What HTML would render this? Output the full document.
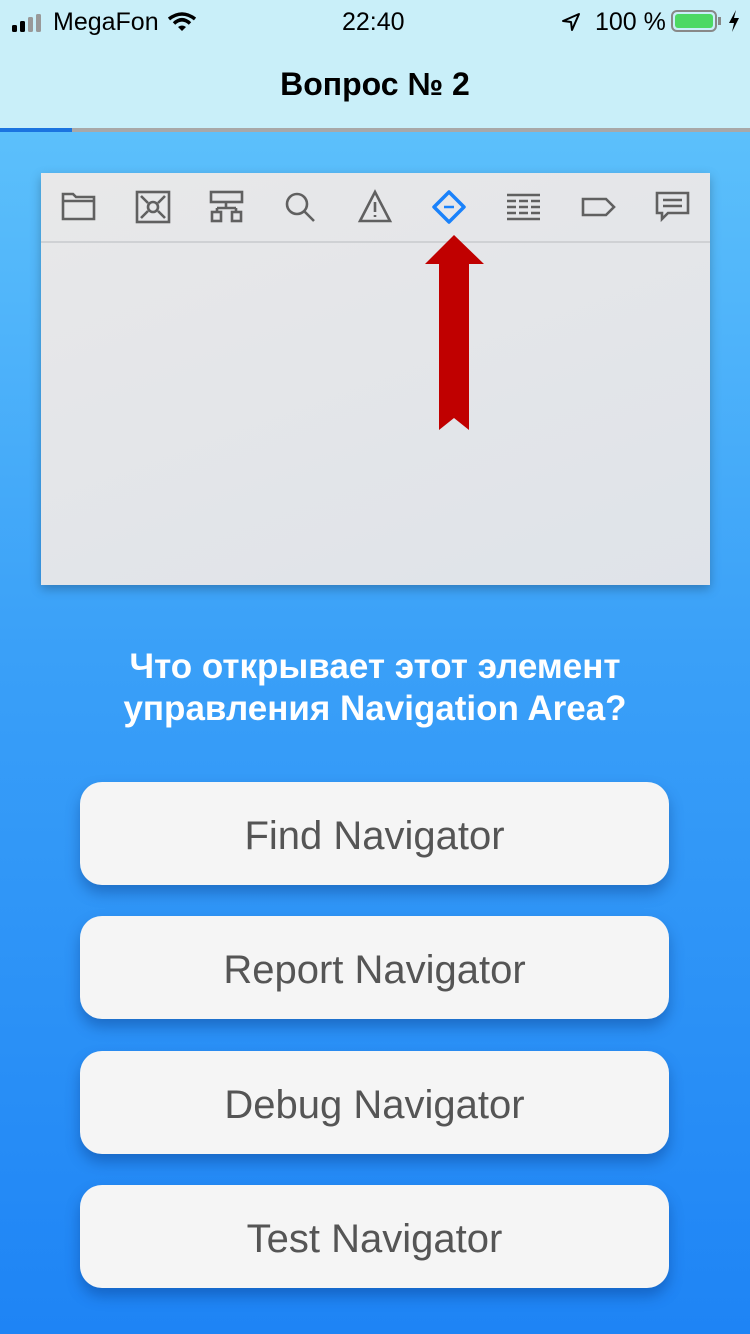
<!DOCTYPE html>
<html><head><meta charset="utf-8"><style>
*{margin:0;padding:0;box-sizing:border-box}
body{width:750px;height:1334px;overflow:hidden;position:relative;font-family:"Liberation Sans",sans-serif;background:linear-gradient(180deg,#5cc0fb 130px,#3aa0f8 650px,#1e84f5 1334px)}
.hdr{position:absolute;left:0;top:0;width:750px;height:128px;background:#c9eff9}
.st{position:absolute;top:8px;font-size:25px;color:#000}
.title{position:absolute;top:66px;width:750px;text-align:center;font-size:32px;font-weight:bold}
.prog{position:absolute;top:128px;left:0;width:750px;height:4px;background:#a8a8a8}
.prog div{width:72px;height:4px;background:#1b74e0}
.card{position:absolute;left:41px;top:173px;width:669px;height:412px;background:linear-gradient(160deg,#e8e8e9,#dfe3e9);box-shadow:0 4px 10px rgba(0,0,0,.25)}
.line{position:absolute;left:0;top:68px;width:669px;height:2px;background:#cfd1d4}
.q{position:absolute;top:646px;width:750px;text-align:center;color:#fff;font-weight:bold;font-size:35px;line-height:42px}
.btn{position:absolute;left:80px;width:589px;height:103px;border-radius:22px;background:#f5f5f5;box-shadow:0 8px 14px rgba(0,40,110,.35);text-align:center;line-height:109px;font-size:40px;color:#555}
</style></head><body>
<div class="hdr">
<svg style="position:absolute;left:12px;top:14px" width="34" height="18"><rect x="0" y="11" width="5" height="7" rx="1.5"/><rect x="8" y="7" width="5" height="11" rx="1.5"/><rect x="16" y="3" width="5" height="15" rx="1.5" fill="#999"/><rect x="24" y="0" width="5" height="18" rx="1.5" fill="#999"/></svg>
<div class="st" style="left:53px">MegaFon</div>
<svg style="position:absolute;left:168px;top:12px" width="28" height="20" viewBox="0 0 28 20"><path d="M1 7 Q14 -3 27 7" stroke="#000" stroke-width="3.5" fill="none"/><path d="M6 11.5 Q14 4 22 11.5" stroke="#000" stroke-width="3.5" fill="none"/><path d="M10 15 L14 19 L18 15 Q14 12 10 15Z"/></svg>
<div class="st" style="left:342px;font-weight:500">22:40</div>
<svg style="position:absolute;left:561px;top:12px" width="20" height="20" viewBox="0 0 20 20"><path d="M18 2 L2 9 L10 10 L11 18 Z" fill="none" stroke="#000" stroke-width="2" stroke-linejoin="round"/></svg>
<div class="st" style="left:595px">100 %</div>
<div style="position:absolute;left:671px;top:10px;width:46px;height:22px;border:2px solid #888;border-radius:6px;padding:2px"><div style="width:100%;height:100%;background:#4cd964;border-radius:3px"></div></div>
<div style="position:absolute;left:718px;top:17px;width:3px;height:8px;background:#888"></div>
<svg style="position:absolute;left:728px;top:10px" width="12" height="22" viewBox="0 0 12 22"><path d="M8 0 L1 13 H6 L4 22 L11 8 H6 Z"/></svg>
<div class="title">Вопрос № 2</div>
</div>
<div class="prog"><div></div></div>
<div class="card">
<svg width="669" height="70" viewBox="41 173 669 70" fill="none" stroke="#606060" stroke-width="2.6">
<path d="M63 194 h10 l3 3 h18 v22 h-31 z M63 201 h31"/>
<rect x="137" y="192" width="32" height="30"/><circle cx="153" cy="207" r="5"/><path d="M141 196 l7 7 M165 196 l-7 7 M141 218 l7 -7 M165 218 l-7 -7"/>
<rect x="211" y="192" width="31" height="10"/><path d="M226 202 v6 M217 208 h19 M217 208 v4 M236 208 v4"/><rect x="212" y="212" width="9" height="9"/><rect x="232" y="212" width="9" height="9"/>
<circle cx="297" cy="204" r="10"/><path d="M304 211 l10 10"/>
<path d="M375 192 L360 221 h30 Z M375 202 v10 M375 215 v2"/>
<path d="M449 192 L464 207 L449 222 L434 207 Z" stroke="#1a82fb" stroke-width="3.5" stroke-linejoin="round"/><path d="M444 207 h10" stroke="#1a82fb" stroke-width="2.5"/>
<path d="M507 195 h33 M507 201 h9 M519 201 h9 M531 201 h9 M507 207 h9 M519 207 h9 M531 207 h9 M507 213 h9 M519 213 h9 M531 213 h9 M507 219 h33"/>
<path d="M583 199 h23 l8 8 l-8 8 h-23 z"/>
<path d="M657 193 h31 v20 h-20 l-6 6 v-6 h-5 z M663 200 h19 M663 206 h19"/>
</svg>
<div class="line"></div>
<svg style="position:absolute;left:0;top:0" width="669" height="412" viewBox="41 173 669 412"><path d="M454 235 L484 264 L469 264 L469 430 L454 418 L439 430 L439 264 L425 264 Z" fill="#c00000"/></svg>
</div>
<div class="q">Что открывает этот элемент<br>управления Navigation Area?</div>
<div class="btn" style="top:782px">Find Navigator</div>
<div class="btn" style="top:916px">Report Navigator</div>
<div class="btn" style="top:1051px">Debug Navigator</div>
<div class="btn" style="top:1185px">Test Navigator</div>
</body></html>
